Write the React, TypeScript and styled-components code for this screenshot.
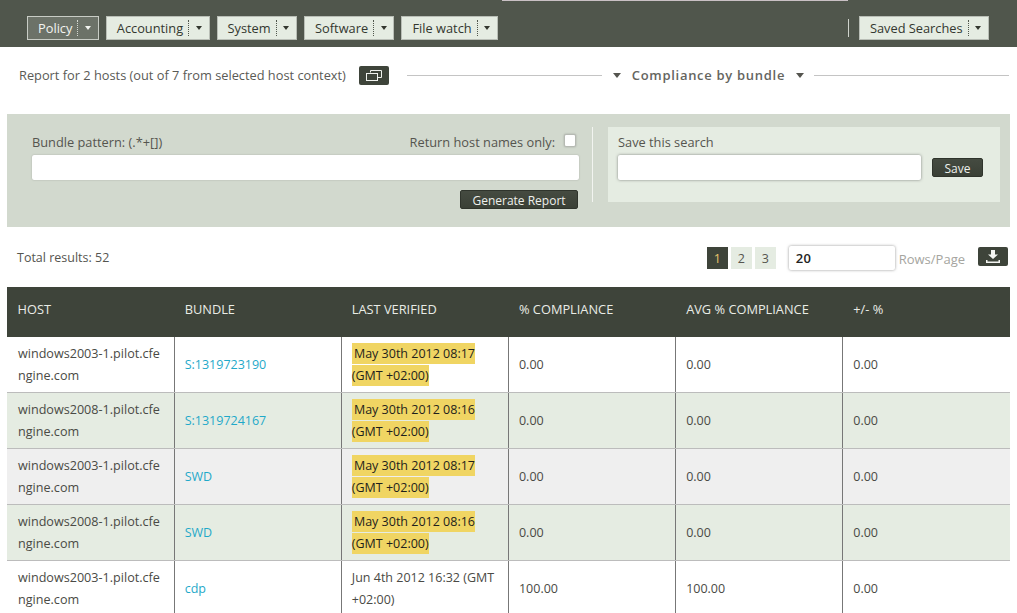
import React from "react";
import styled, { createGlobalStyle } from "styled-components";

const Global = createGlobalStyle`
  html, body { margin: 0; padding: 0; background: #fff; overflow: hidden; }
  body { font-family: "Open Sans", "Noto Sans", sans-serif; font-size: 12.8px; color: #4a4a45; }
  #root { height: 613px; overflow: hidden; }
`;

const TopBar = styled.header`
  position: relative;
  height: 47px;
  background: #50564c;
  box-sizing: border-box;
  padding: 16px 28px 0 27px;
  display: flex;
  align-items: flex-start;
  gap: 7px;
`;
const TopStrip = styled.div`
  position: absolute;
  top: 0;
  left: 502px;
  width: 346px;
  height: 1px;
  background: #c9c0c4;
`;
const MenuButton = styled.div<{ $active?: boolean }>`
  height: 24px;
  box-sizing: border-box;
  display: flex;
  align-items: center;
  padding-left: 10px;
  border: 1px solid ${(p) => (p.$active ? "#c8ccc5" : "#b9beb6")};
  background: ${(p) => (p.$active ? "#6c7268" : "#e5ece2")};
  color: ${(p) => (p.$active ? "#f2f4f0" : "#33372f")};
  font-size: 12.8px;
  white-space: nowrap;
`;
const MenuCaret = styled.span<{ $active?: boolean }>`
  margin-left: 5px;
  width: 20.4px;
  height: 16px;
  border-left: 1px dotted ${(p) => (p.$active ? "#d5d8d2" : "#50564c")};
  display: flex;
  align-items: center;
  justify-content: center;
  box-sizing: border-box;
  &::after {
    content: "";
    border-left: 3.5px solid transparent;
    border-right: 3.5px solid transparent;
    border-top: 4px solid ${(p) => (p.$active ? "#f2f4f0" : "#33372f")};
  }
`;
const BarSpacer = styled.div`
  flex: 1;
`;
const BarDivider = styled.div`
  width: 1px;
  height: 18px;
  margin: 3px 3px 0 0;
  background: #cfd3cc;
`;

const ReportRow = styled.section`
  height: 67px;
  box-sizing: border-box;
  padding: 19px 8px 0 19px;
  display: flex;
  align-items: flex-start;
`;
const ReportText = styled.span`
  line-height: 19px;
  color: #5a5a55;
  white-space: nowrap;
`;
const ContextButton = styled.button`
  width: 30px;
  height: 19px;
  margin-left: 13px;
  padding: 0;
  border: 0;
  border-radius: 2px;
  background: #3e443a;
  display: flex;
  align-items: center;
  justify-content: center;
`;
const Rule = styled.div<{ $lead?: boolean }>`
  flex: 1;
  height: 1px;
  margin-top: 9px;
  margin-left: ${(p) => (p.$lead ? "18px" : "0")};
  background: #c4c4c4;
`;
const TitleGroup = styled.div`
  display: flex;
  align-items: center;
  height: 18px;
  margin: 0 10px 0 11px;
  gap: 11px;
  font-size: 13px;
  font-weight: 600;
  letter-spacing: 0.7px;
  color: #65655f;
  white-space: nowrap;
`;
const TitleCaret = styled.span`
  border-left: 4px solid transparent;
  border-right: 4px solid transparent;
  border-top: 5px solid #55554f;
`;

const FilterPanel = styled.section`
  margin: 0 7px;
  height: 113px;
  box-sizing: border-box;
  background: #d2d9ce;
  padding: 13px 10px 0 25px;
  display: flex;
  align-items: flex-start;
`;
const SearchColumn = styled.div`
  width: 547px;
  display: flex;
  flex-direction: column;
`;
const LabelRow = styled.div`
  height: 28px;
  display: flex;
  align-items: flex-start;
  justify-content: space-between;
  line-height: 30px;
  color: #55554f;
`;
const CheckGroup = styled.label`
  display: flex;
  align-items: flex-start;
  padding-right: 3px;
`;
const Check = styled.span`
  display: block;
  width: 10px;
  height: 11px;
  margin: 7px 0 0 9px;
  background: #fff;
  border: 1px solid #b6bab3;
  border-radius: 2px;
  box-shadow: 0 0 2px rgba(60, 60, 60, 0.35);
`;
const TextInput = styled.div<{ $w?: number; $strong?: boolean }>`
  height: 25px;
  box-sizing: border-box;
  width: ${(p) => (p.$w ? `${p.$w}px` : "100%")};
  background: #fff;
  border-radius: 2px;
  box-shadow: 0 0 ${(p) => (p.$strong ? "3px rgba(60, 60, 60, 0.6)" : "1.5px rgba(70, 70, 70, 0.4)")};
`;
const ActionRow = styled.div`
  display: flex;
  justify-content: flex-end;
  margin-top: 10px;
  padding-right: 1px;
`;
const DarkButton = styled.button<{ $w: number }>`
  width: ${(p) => p.$w}px;
  height: 19px;
  padding: 2px 0 0;
  border: 1px solid #2f342c;
  border-radius: 2px;
  background: linear-gradient(#454b41, #3a4036);
  color: #eef0ec;
  font-family: inherit;
  font-size: 12px;
  line-height: 15px;
`;
const PanelDivider = styled.div`
  width: 1px;
  height: 75px;
  margin-left: 13px;
  background: #f2f4f0;
`;
const SavePanel = styled.div`
  width: 392px;
  height: 75px;
  margin-left: 15px;
  box-sizing: border-box;
  padding: 0 0 0 10px;
  background: #e5ece2;
`;
const SaveLabel = styled.div`
  height: 28px;
  line-height: 30px;
  color: #55554f;
`;
const SaveRow = styled.div`
  display: flex;
  align-items: center;
  gap: 11px;
`;

const PagerRow = styled.section`
  height: 60px;
  box-sizing: border-box;
  padding: 20px 9px 0 17px;
  display: flex;
  align-items: flex-start;
`;
const TotalText = styled.span`
  line-height: 22px;
  font-size: 12.5px;
  color: #55554f;
`;
const PageButton = styled.span<{ $on?: boolean }>`
  width: 21px;
  height: 22px;
  margin-left: 3px;
  display: flex;
  align-items: center;
  justify-content: center;
  background: ${(p) => (p.$on ? "#3e443a" : "#e5ece2")};
  color: ${(p) => (p.$on ? "#e9c46a" : "#55554f")};
  font-size: 12.5px;
`;
const RowsInput = styled.div`
  width: 106px;
  height: 24px;
  margin: -1px 0 0 13px;
  box-sizing: border-box;
  padding-left: 7px;
  line-height: 24px;
  background: #fff;
  border-radius: 2px;
  box-shadow: 0 0 3px rgba(60, 60, 60, 0.55);
  color: #222;
  font-weight: 600;
  font-size: 13px;
  letter-spacing: 0.4px;
`;
const RowsLabel = styled.span`
  margin-left: 4px;
  line-height: 25px;
  font-size: 13px;
  color: #a5a5a0;
`;
const DownloadButton = styled.button`
  width: 30px;
  height: 19px;
  margin-left: 13px;
  padding: 0;
  border: 0;
  border-radius: 2px;
  background: #3e443a;
  display: flex;
  align-items: center;
  justify-content: center;
`;

const Table = styled.table`
  margin-left: 7px;
  width: 1003px;
  table-layout: fixed;
  border-collapse: collapse;
  font-size: 12.5px;
`;
const HeadCell = styled.th`
  width: 167px;
  height: 50px;
  box-sizing: border-box;
  padding: 0 0 6px 10.5px;
  background: #3e443a;
  color: #e9ece6;
  font-weight: 400;
  text-align: left;
  text-transform: uppercase;
  font-size: 12.8px;
`;
const Row = styled.tr<{ $bg: string }>`
  background: ${(p) => p.$bg};
  &:first-child td { height: 55px; }
`;
const Cell = styled.td`
  height: 56px;
  box-sizing: border-box;
  padding: 1px 10px 0 10px;
  border-right: 1px solid #777;
  border-bottom: 1px solid #bcbcbc;
  line-height: 22px;
  color: #4a4a45;
  &:last-child { border-right: 0; }
`;
const HostCell = styled(Cell)`
  padding-left: 11px;
  font-size: 12.6px;
  word-break: break-all;
`;
const BundleLink = styled.a`
  color: #1fa9c9;
  text-decoration: none;
`;
const Stale = styled.span`
  background: #f0d563;
  color: #1f1f1c;
  padding: 2px 0;
  -webkit-box-decoration-break: clone;
  box-decoration-break: clone;
`;

const menus = ["Accounting", "System", "Software", "File watch"];
const rows = [
  { host: "windows2003-1.pilot.cfengine.com", bundle: "S:1319723190", date: "May 30th 2012 08:17", stale: true, a: "0.00", b: "0.00", bg: "#ffffff" },
  { host: "windows2008-1.pilot.cfengine.com", bundle: "S:1319724167", date: "May 30th 2012 08:16", stale: true, a: "0.00", b: "0.00", bg: "#e5ece2" },
  { host: "windows2003-1.pilot.cfengine.com", bundle: "SWD", date: "May 30th 2012 08:17", stale: true, a: "0.00", b: "0.00", bg: "#efefef" },
  { host: "windows2008-1.pilot.cfengine.com", bundle: "SWD", date: "May 30th 2012 08:16", stale: true, a: "0.00", b: "0.00", bg: "#e5ece2" },
  { host: "windows2003-1.pilot.cfengine.com", bundle: "cdp", date: "Jun 4th 2012 16:32", stale: false, a: "100.00", b: "100.00", bg: "#ffffff" },
];
const heads = ["Host", "Bundle", "Last verified", "% Compliance", "Avg % Compliance", "+/- %"];

export default function App() {
  return (
    <>
      <Global />
      <TopBar>
        <TopStrip />
        <MenuButton $active>
          Policy
          <MenuCaret $active />
        </MenuButton>
        {menus.map((m) => (
          <MenuButton key={m}>
            {m}
            <MenuCaret />
          </MenuButton>
        ))}
        <BarSpacer />
        <BarDivider />
        <MenuButton>
          Saved Searches
          <MenuCaret />
        </MenuButton>
      </TopBar>

      <ReportRow>
        <ReportText>Report for 2 hosts (out of 7 from selected host context)</ReportText>
        <ContextButton aria-label="Change host context">
          <svg width="16" height="11" viewBox="0 0 16 11" fill="none" stroke="#f0f2ee" strokeWidth="1">
            <path d="M4.5 2.5V0.5H15.5V7.5H11.5" />
            <rect x="0.5" y="3.5" width="11" height="7" />
          </svg>
        </ContextButton>
        <Rule $lead />
        <TitleGroup>
          <TitleCaret />
          Compliance by bundle
          <TitleCaret />
        </TitleGroup>
        <Rule />
      </ReportRow>

      <FilterPanel>
        <SearchColumn>
          <LabelRow>
            <span>Bundle pattern: (.*+[])</span>
            <CheckGroup>
              Return host names only:
              <Check />
            </CheckGroup>
          </LabelRow>
          <TextInput />
          <ActionRow>
            <DarkButton $w={118}>Generate Report</DarkButton>
          </ActionRow>
        </SearchColumn>
        <PanelDivider />
        <SavePanel>
          <SaveLabel>Save this search</SaveLabel>
          <SaveRow>
            <TextInput $w={303} $strong />
            <DarkButton $w={51}>Save</DarkButton>
          </SaveRow>
        </SavePanel>
      </FilterPanel>

      <PagerRow>
        <TotalText>Total results: 52</TotalText>
        <BarSpacer />
        <PageButton $on>1</PageButton>
        <PageButton>2</PageButton>
        <PageButton>3</PageButton>
        <RowsInput>20</RowsInput>
        <RowsLabel>Rows/Page</RowsLabel>
        <DownloadButton aria-label="Download">
          <svg width="16" height="14" viewBox="0 0 16 14" fill="#f4f5f2">
            <path d="M6 0H10V4.5H13L8 9L3 4.5H6Z" />
            <path d="M1 10H2.5V11.5H13.5V10H15V13H1Z" />
          </svg>
        </DownloadButton>
      </PagerRow>

      <Table>
        <thead>
          <tr>
            {heads.map((h) => (
              <HeadCell key={h}>{h}</HeadCell>
            ))}
          </tr>
        </thead>
        <tbody>
          {rows.map((r, i) => (
            <Row key={i} $bg={r.bg}>
              <HostCell>{r.host}</HostCell>
              <Cell>
                <BundleLink href="#">{r.bundle}</BundleLink>
              </Cell>
              <Cell>
                {r.stale ? (
                  <Stale>
                    {"\u2009"}
                    {r.date} (GMT +02:00)
                  </Stale>
                ) : (
                  <>{r.date} (GMT +02:00)</>
                )}
              </Cell>
              <Cell>{r.a}</Cell>
              <Cell>{r.b}</Cell>
              <Cell>0.00</Cell>
            </Row>
          ))}
        </tbody>
      </Table>
    </>
  );
}
